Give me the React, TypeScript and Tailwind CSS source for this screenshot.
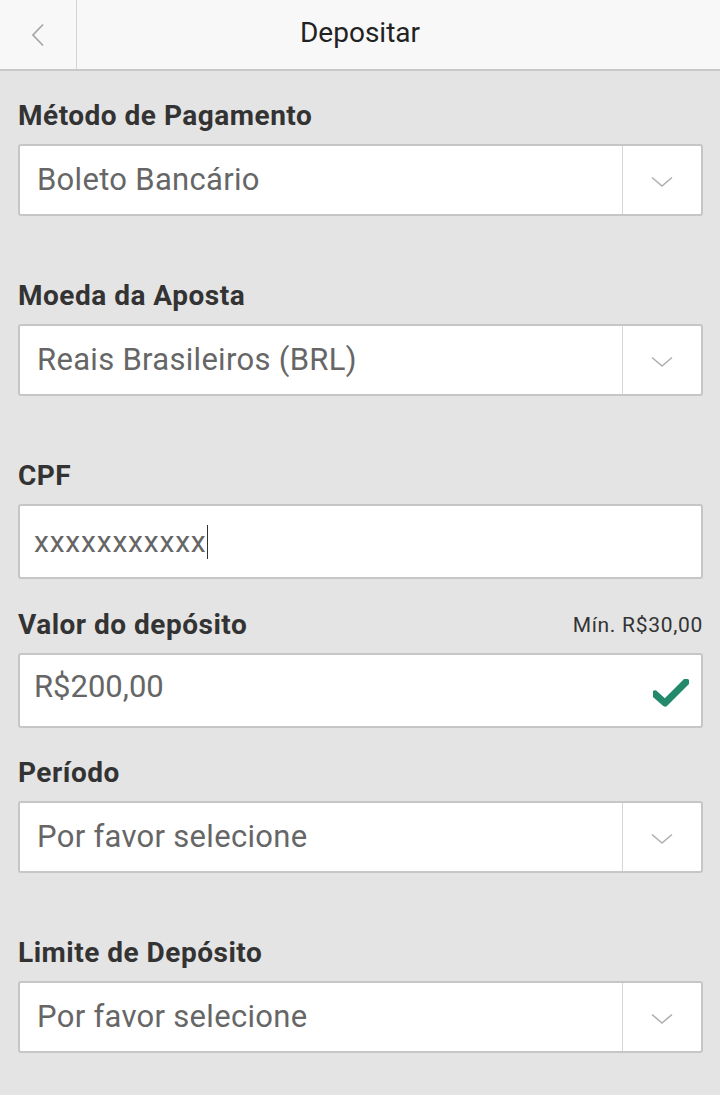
const FONT = "font-['Roboto','Liberation_Sans',sans-serif]"

const Chevron = () => (
  <svg width="22" height="12" viewBox="0 0 22 12" fill="none">
    <path d="M1 1.5 L11 10 L21 1.5" stroke="#b0b0b0" strokeWidth="1.6" />
  </svg>
)

const Label = ({ children, right }: { children: string; right?: string }) => (
  <div className="flex items-center justify-between h-[30px] mb-[13px]">
    <span className="text-[28px] font-bold text-[#333] leading-[30px] tracking-[0.5px]">{children}</span>
    {right && <span className="text-[21px] text-[#333] leading-[30px] tracking-[0.7px]">{right}</span>}
  </div>
)

const Select = ({ label, value }: { label: string; value: string }) => (
  <div className="mb-[65px]">
    <Label>{label}</Label>
    <div className="flex h-[72px] bg-white border-2 border-[#c6c6c6] rounded-[3px]">
      <div className="flex-1 flex items-center pl-[17px] text-[31px] text-[#666] tracking-[0.3px]">{value}</div>
      <div className="w-[79px] border-l border-[#d6d6d6] flex items-center justify-center pt-[4px]">
        <Chevron />
      </div>
    </div>
  </div>
)

export default function App() {
  return (
    <div className={`${FONT} w-[720px] h-[1095px] bg-[#e4e4e4] overflow-hidden`}>
      {/* Header */}
      <div className="h-[71px] bg-[#f8f8f8] border-b-2 border-[#c9c9c9] flex">
        <div className="w-[77px] border-r border-[#d4d4d4] flex items-center justify-center">
          <svg width="14" height="24" viewBox="0 0 14 24" fill="none">
            <path d="M12 1.5 L2 12 L12 22.5" stroke="#a8a8a8" strokeWidth="1.8" />
          </svg>
        </div>
        <div className="flex-1 flex items-center justify-center pr-[77px] text-[28px] text-[#222]">
          <span className="-mt-[4px]">Depositar</span>
        </div>
      </div>

      <div className="px-[18px] pt-[30px] w-[721px]">
        <Select label="Método de Pagamento" value="Boleto Bancário" />
        <Select label="Moeda da Aposta" value="Reais Brasileiros (BRL)" />

        <div className="mb-[31px]">
          <Label>CPF</Label>
          <div className="h-[75px] bg-white border-2 border-[#c6c6c6] rounded-[3px] flex items-center pl-[14px]">
            <span className="text-[30px] text-[#666] tracking-[0.8px]">xxxxxxxxxxx</span>
            <span className="w-[1px] h-[34px] bg-[#333]" />
          </div>
        </div>

        <div className="mb-[30px]">
          <Label right="Mín. R$30,00">Valor do depósito</Label>
          <div className="h-[75px] bg-white border-2 border-[#c6c6c6] rounded-[3px] flex items-center justify-between pl-[14px] pr-[12px]">
            <span className="text-[31px] text-[#666] -mt-[6px]">R$200,00</span>
            <svg width="36" height="28" viewBox="0 0 36 28" className="mt-[4px]">
              <path d="M2 15 L12 24 L33 3" stroke="#23896b" strokeWidth="7" fill="none" strokeLinecap="round" strokeLinejoin="round" />
            </svg>
          </div>
        </div>

        <Select label="Período" value="Por favor selecione" />
        <Select label="Limite de Depósito" value="Por favor selecione" />
      </div>
    </div>
  )
}
